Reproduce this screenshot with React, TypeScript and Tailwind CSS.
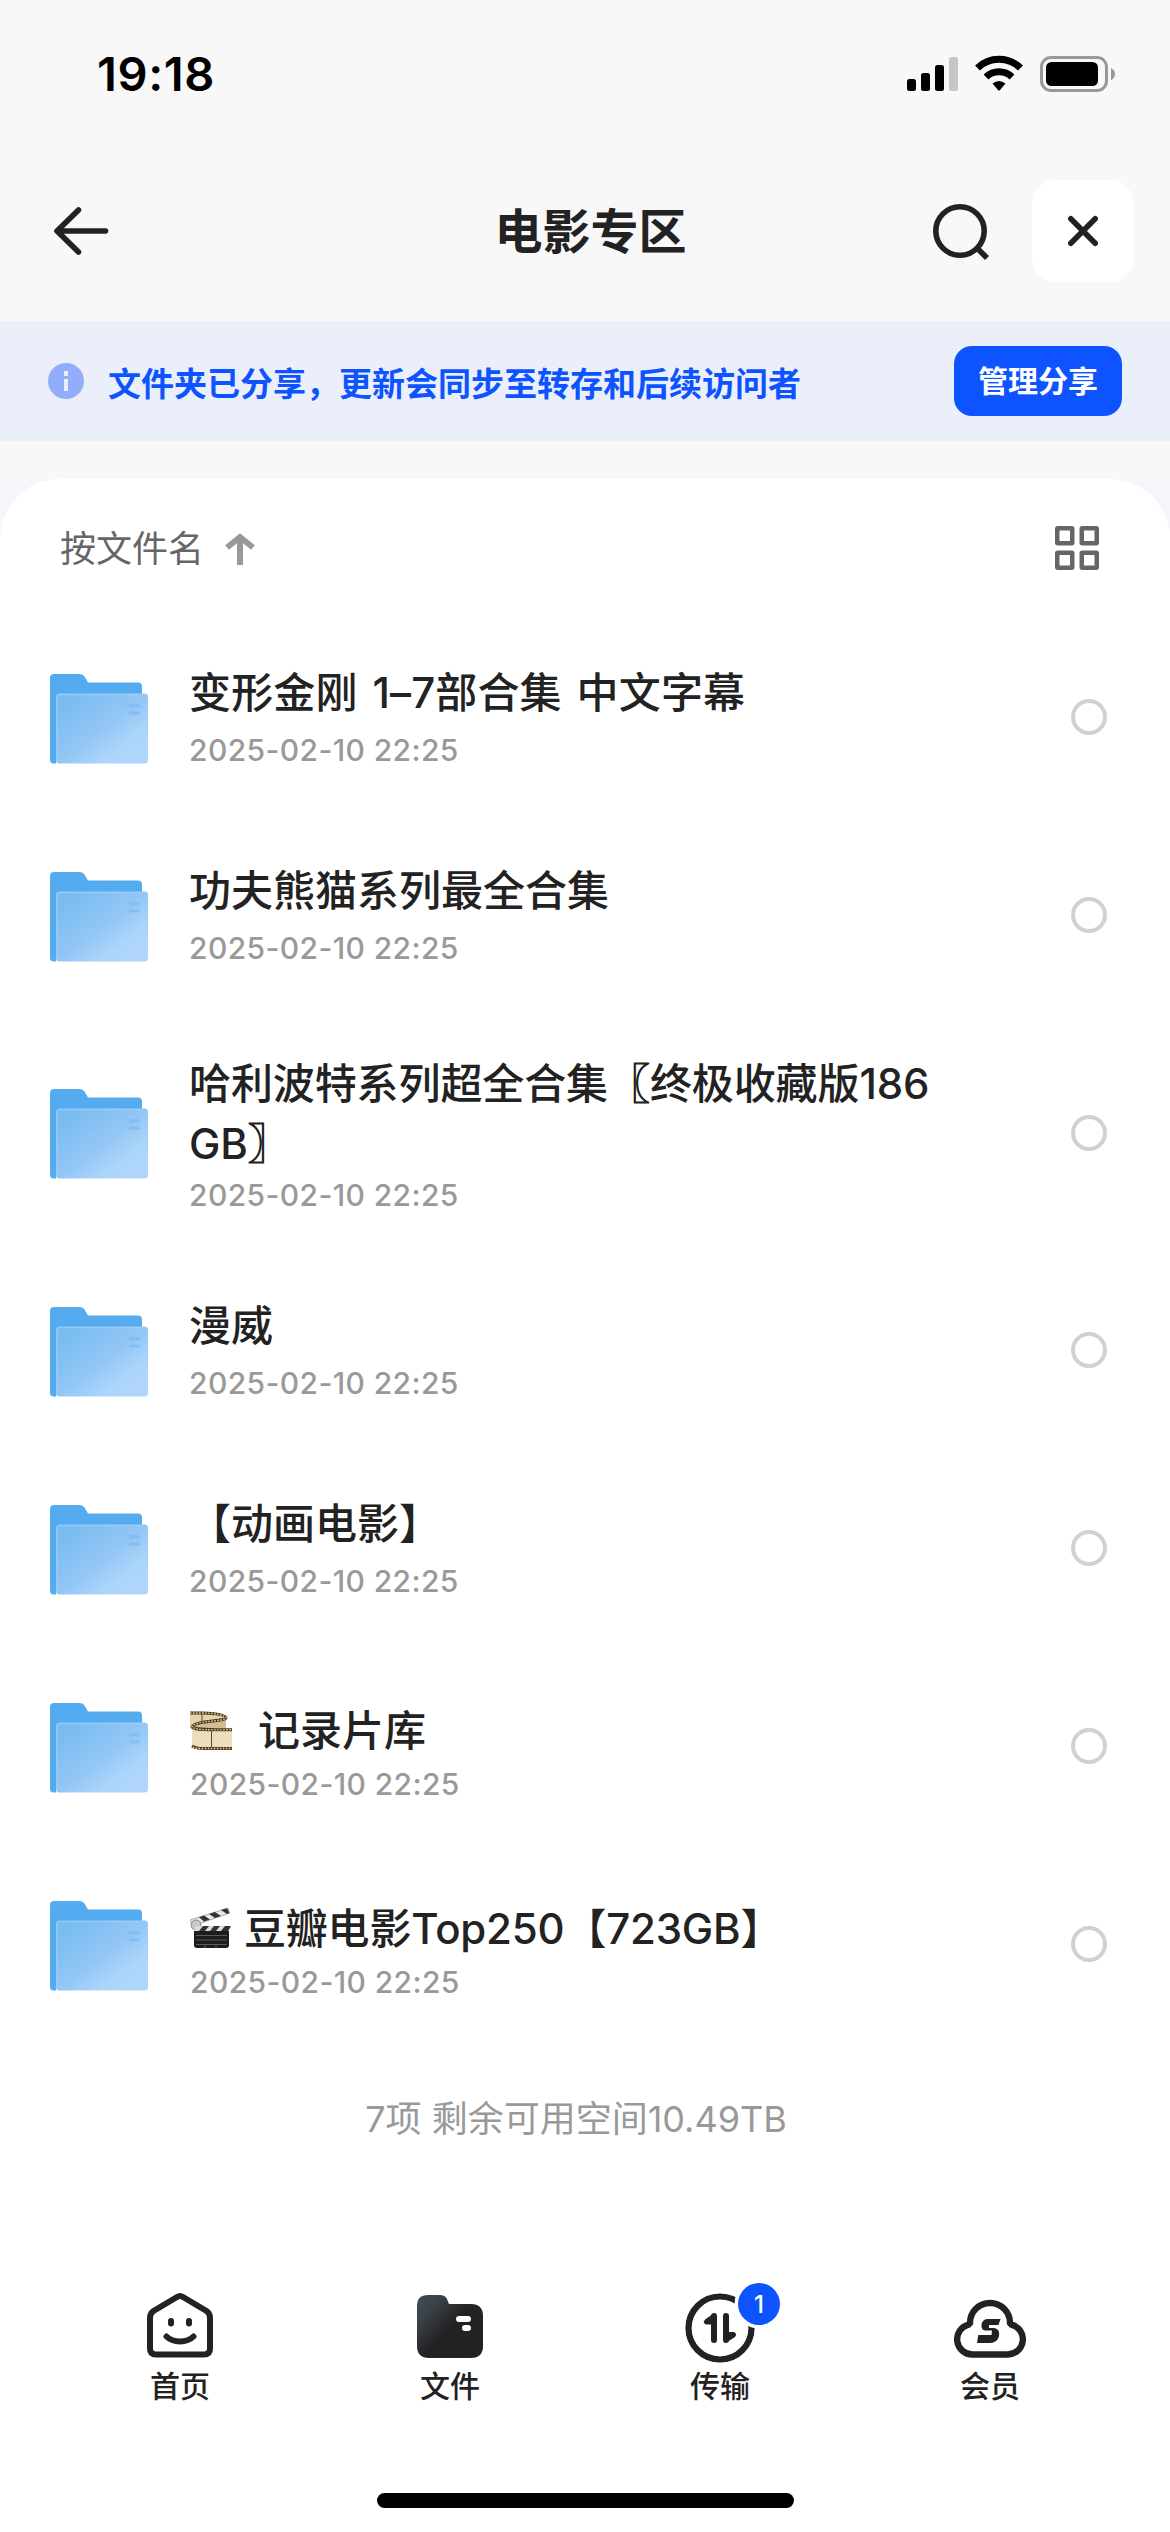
import React from "react";

const inter = "font-['Inter','Noto_Sans_CJK_SC',sans-serif]";

function StatusBar() {
  return (
    <div className="flex h-[144px] items-start justify-between pl-[97px] pr-[54px]">
      <div className="mt-[46px] text-[47px] leading-[56px] font-semibold tracking-[0.6px] text-black">19:18</div>
      <svg className="mt-[50px]" width="210" height="48" viewBox="906 50 210 48">
        <rect x="907" y="79" width="9" height="12" rx="2.5" />
        <rect x="921" y="73" width="9" height="18" rx="2.5" />
        <rect x="935" y="65" width="9" height="26" rx="2.5" />
        <rect x="949" y="57" width="9" height="34" rx="2.5" fill="#c6c6c6" />
        <path d="M977.5 68 A31 31 0 0 1 1020.500 68" fill="none" stroke="#000" strokeWidth="7" />
        <path d="M986 77 A19 19 0 0 1 1012 77" fill="none" stroke="#000" strokeWidth="7" />
        <path d="M992.500 83.500 Q999 78.500 1005.500 83.500 L999.800 90.200 Q999 91 998.200 90.200 Z" />
        <rect x="1041.500" y="57.500" width="65" height="33" rx="9.500" fill="none" stroke="#999" strokeWidth="3" />
        <rect x="1046" y="62" width="52" height="24" rx="5.500" />
        <path d="M1111 68 Q1115 70 1115 74 Q1115 78 1111 80 Z" fill="#999" />
      </svg>
    </div>
  );
}

function Header() {
  return (
    <header className="grid h-[177px] grid-cols-3 pt-9">
      <div className="flex h-[102px] items-center pl-[51px]">
        <svg width="60" height="60" viewBox="0 0 60 60" fill="none" stroke="#222" strokeWidth="5.600" strokeLinecap="round" strokeLinejoin="round">
          <path d="M27.500 9 L6 30 L27.500 51 M7 30 H54.500" />
        </svg>
      </div>
      <h1 className="pl-[11px] text-center text-[48px] leading-[104px] font-bold text-[#222]">电影专区</h1>
      <div className="flex justify-end gap-[40px] pr-9">
        <svg className="mt-[20px]" width="62" height="62" viewBox="0 0 62 62" fill="none" stroke="#222" strokeWidth="5.600">
          <circle cx="30" cy="31" r="24.200" />
          <path d="M47 48 L57 58" />
        </svg>
        <div className="flex size-[102px] items-center justify-center rounded-[24px] bg-white">
          <svg width="36" height="36" viewBox="0 0 36 36" stroke="#222" strokeWidth="5.600" strokeLinecap="round">
            <path d="M5.800 5.800 L30.200 30.200 M30.200 5.800 L5.800 30.200" />
          </svg>
        </div>
      </div>
    </header>
  );
}

function Banner() {
  return (
    <div className="flex h-[120px] items-center bg-[#ebeff9] pl-12 pr-12 font-bold">
      <svg width="36" height="36" viewBox="0 0 36 36">
        <circle cx="18" cy="18" r="18" fill="#92aefb" />
        <rect x="16" y="8" width="4" height="5" fill="#ebeff9" />
        <rect x="16" y="16" width="4" height="12" fill="#ebeff9" />
      </svg>
      <span className="ml-6 flex-1 pt-[5px] text-[33px] leading-[48px] whitespace-nowrap text-[#0d53ff]">
        文件夹已分享，更新会同步至转存和后续访问者
      </span>
      <span className="h-[70px] w-[168px] rounded-[18px] bg-[#0d53ff] text-center text-[30px] leading-[70px] text-white">
        管理分享
      </span>
    </div>
  );
}

function FolderIcon() {
  return (
    <svg className="mt-[3px] block" width="98" height="90" viewBox="0 0 98 90">
      <defs>
        <linearGradient id="folderFront" x1="0.1" y1="0.1" x2="0.9" y2="0.9">
          <stop offset="0" stopColor="#78bcf0" />
          <stop offset="0.5" stopColor="#92c6f6" />
          <stop offset="0.8" stopColor="#acd5fa" />
          <stop offset="1" stopColor="#b0d5fb" />
        </linearGradient>
      </defs>
      <path d="M0 4 Q0 0 4 0 H30 Q33 0 34.500 2.500 L38 8.500 H88 Q92 8.500 92 12.500 V80 H6 V89.500 H4 Q0 89.500 0 86 Z" fill="#55abef" />
      <rect x="6" y="19.500" width="92" height="70" rx="3.500" fill="url(#folderFront)" />
      <path d="M7 88 V23 Q7 20.500 10 20.500 H96" fill="none" stroke="#a0d0f8" strokeWidth="1.500" opacity="0.7" />
      <rect x="79" y="30" width="10.500" height="3.500" fill="#83bdf3" />
      <rect x="79" y="37.500" width="10.500" height="3" fill="#83bdf3" />
    </svg>
  );
}

function FilmIcon() {
  return (
    <svg width="42" height="40" viewBox="0 0 42 40">
      <path d="M0 2 C14 1 35 2 36 6 V29 C30 31 12 30 3 34 V14 C4 11 18 10 30 9 C18 9 8 14 0 13 Z" fill="#d3bd90" />
      <path d="M0 3 H12 C24 3 33 5 34 7 C30 10 8 10 3 15 L0 15 Z" fill="#e6d4a8" />
      <path d="M2 17 C6 19 20 18.500 42 18.500 V38 H12 Q3 38 2 34 Z" fill="#ecdfbb" />
      <path d="M0 2 H12 C26 2.500 36 4 36 7 C34 11 5 9 2 16 C6 19.500 22 18.800 42 18.800" fill="none" stroke="#4c381d" strokeWidth="3" />
      <path d="M0 2 H12 C26 2.500 36 4 36 7 C34 11 5 9 2 16 C6 19.500 22 18.800 42 18.800" fill="none" stroke="#e8d9b2" strokeWidth="1.400" strokeDasharray="1.500 1.500" />
      <path d="M2 35 Q6 37.500 14 37.500 H42" fill="none" stroke="#4c381d" strokeWidth="3" />
      <path d="M3 36 Q6 37.500 14 37.500 H42" fill="none" stroke="#e8d9b2" strokeWidth="1.400" strokeDasharray="1.500 1.500" />
      <path d="M21.500 20 V36 M12 3 V10" stroke="#5e482a" />
    </svg>
  );
}

function ClapperIcon() {
  return (
    <svg width="42" height="42" viewBox="0 0 42 42">
      <path d="M0 12 L38 0 L39.500 5 L3 18 Z" fill="#e8e8e8" stroke="#777" strokeWidth="0.6" />
      <path d="M9 9.200 L14 7.600 L20 11.500 L14 13.500 Z M19 6 L25 4 L31 8 L25 10 Z M31 2 L37 0.300 L39.500 5 L37 6 Z" fill="#333" />
      <circle cx="6" cy="17" r="5" fill="#c3cbd0" stroke="#777" strokeWidth="0.8" />
      <path d="M6 18 H41 L39 23 H4 Z" fill="#ddd" />
      <path d="M13 18 H19 L15 23 H9 Z M24 18 H30 L26 23 H20 Z M35 18 H41 L38 23 H31 Z" fill="#333" />
      <path d="M4 23 H39 V37 Q39 40 36 40 H7 Q4 40 4 37 Z" fill="#1c1c1c" />
      <path d="M6 27.500 H37 M6 32 H37 M6 36.500 H37 M15 37 V40 M26 37 V40" stroke="#6b6b6b" strokeWidth="0.800" />
    </svg>
  );
}

interface Item {
  lines: React.ReactNode[];
  icon?: "film" | "clapper";
  row: string;
  body: string;
  text: string;
  gap: string;
}

const plain = {
  row: "h-[198px]",
  body: "ml-[41px] pt-[2px]",
  text: "leading-[60px]",
  gap: "mt-[4px]",
};

const withIcon = {
  row: "h-[198px]",
  body: "ml-[42px] pt-[18px]",
  text: "leading-[54px]",
  gap: "mt-[3px]",
};

function Bracket({ children }: { children: string }) {
  return <span className="[-webkit-text-stroke:1px_#222]">{children}</span>;
}

const items: Item[] = [
  { ...plain, text: "leading-[60px] tracking-[0.15px] [word-spacing:3.5px]", lines: ["变形金刚 1–7部合集 中文字幕"] },
  { ...plain, lines: ["功夫熊猫系列最全合集"] },
  {
    row: "h-[237px]",
    body: "ml-[41px] pt-[6px]",
    text: "leading-[60px] tracking-[-0.1px]",
    gap: "-mt-[2px]",
    lines: [
      <>哈利波特系列超全合集<Bracket>〖</Bracket>终极收藏版186</>,
      <>GB<Bracket>〗</Bracket></>,
    ],
  },
  { ...plain, lines: ["漫威"] },
  { ...plain, lines: ["【动画电影】"] },
  { ...withIcon, lines: ["记录片库"], icon: "film" },
  { ...withIcon, text: "leading-[54px] tracking-[-0.2px]", lines: ["豆瓣电影Top250【723GB】"], icon: "clapper" },
];

function Row({ item }: { item: Item }) {
  return (
    <li className={`flex items-center pl-[50px] pr-[63px] ${item.row}`}>
      <FolderIcon />
      <div className={`flex-1 ${item.body}`}>
        <div className={`flex items-center text-[42px] font-[450] whitespace-nowrap text-[#222] ${item.text}`}>
          {item.icon === "film" && <span className="mr-[26px]"><FilmIcon /></span>}
          {item.icon === "clapper" && <span className="mr-[12px]"><ClapperIcon /></span>}
          <div>
            {item.lines.map((line, i) => (
              <div key={i}>{line}</div>
            ))}
          </div>
        </div>
        <div className={`text-[30px] leading-[46px] font-[450] tracking-[0.4px] text-[#999] ${item.gap}`}>2025-02-10 22:25</div>
      </div>
      <span className="size-9 rounded-full border-4 border-[#d0d0d6]" />
    </li>
  );
}

function HomeIcon() {
  return (
    <svg width="72" height="72" viewBox="0 0 72 72" fill="none" stroke="#222" strokeWidth="6" strokeLinecap="round" strokeLinejoin="round">
      <path d="M33 5 Q36 3 39 5 L62.500 19 Q66 21.300 66 26 V56.500 Q66 62.500 60 62.500 H12 Q6 62.500 6 56.500 V26 Q6 21.300 9.500 19 Z" />
      <path d="M27 29 V31.500 M45 29 V31.500" />
      <path d="M22.500 44.500 C29 51 43 51 49.500 44.500" />
    </svg>
  );
}

function FilesIcon() {
  return (
    <svg width="72" height="72" viewBox="0 0 72 72">
      <defs>
        <linearGradient id="filesDark" x1="0.05" y1="0.1" x2="0.5" y2="0.5">
          <stop offset="0" stopColor="#404750" />
          <stop offset="0.35" stopColor="#3b4149" />
          <stop offset="1" stopColor="#222" />
        </linearGradient>
      </defs>
      <path d="M3 14 Q3 3 14 3 H26 Q31 3 33 7 L35 12 H57 Q69 12 69 24 V54 Q69 66 57 66 H15 Q3 66 3 54 Z" fill="url(#filesDark)" />
      <rect x="42" y="24" width="15" height="6" rx="3" fill="#fff" />
      <rect x="48" y="33" width="9" height="6" rx="3" fill="#fff" />
    </svg>
  );
}

function TransferIcon() {
  return (
    <svg width="72" height="72" viewBox="0 0 72 72">
      <circle cx="36" cy="36" r="31.500" fill="none" stroke="#222" strokeWidth="6.200" />
      <path d="M30 24 V48 M42 24 V48" stroke="#222" strokeWidth="6" strokeLinecap="round" />
      <path d="M30 21.200 L21 27.500 Q19 29.500 20.500 31.500 Q21 32.500 23 32.500 H30 Z M42 50.800 L51 45 Q53 43 51.500 41 Q51 40 49 40 H42 Z" fill="#222" />
      <circle cx="75" cy="12" r="24.500" fill="#fff" />
    </svg>
  );
}

function CloudIcon() {
  return (
    <svg width="72" height="72" viewBox="0 0 72 72">
      <path d="M18.500 62.500 H53.500 A15.200 15.200 0 0 0 57.500 32.600 L56 31 A20 20 0 0 0 16 31 L14.500 32.600 A15.200 15.200 0 0 0 18.500 62.500 Z" fill="none" stroke="#222" strokeWidth="6.400" />
      <path d="M46.500 27 H34 Q28.500 27 27.500 32.500 Q26.800 38.500 32 38.500 H38 L37.500 43 H24.300 L23 51 H36 Q43.500 51 45 44 Q46 37 40.500 36 H34.800 L35.200 33 H44.500 Z" fill="#222" />
    </svg>
  );
}

const tabs = [
  { label: "首页", Icon: HomeIcon },
  { label: "文件", Icon: FilesIcon },
  { label: "传输", Icon: TransferIcon, badge: 1 },
  { label: "会员", Icon: CloudIcon },
];

export default function App() {
  return (
    <div className={`flex h-[2532px] w-[1170px] flex-col overflow-hidden bg-[#f8f8f8] ${inter}`}>
      <StatusBar />
      <Header />
      <Banner />
      <div className="h-[38px]" />
      <div className="flex flex-1 flex-col bg-[#f4f6f9]">
        <main className="flex flex-1 flex-col rounded-t-[60px] bg-white">
          <div className="flex h-[139px] items-center justify-between pl-[60px] pr-[71px]">
            <div className="flex items-center text-[36px] leading-[48px] text-[#666]">
              <span>按文件名</span>
              <svg className="ml-[21px]" width="30" height="32" viewBox="0 0 30 32" fill="none" stroke="#999" strokeWidth="6">
                <path d="M15 32 V4 M2 14.500 L15 4 L28 14.500" />
              </svg>
            </div>
            <svg className="mb-[2px]" width="44" height="44" viewBox="0 0 44 44" fill="none" stroke="#666" strokeWidth="4.500">
              <rect x="2.250" y="2.250" width="15" height="15" rx="0.500" />
              <rect x="26.750" y="2.250" width="15" height="15" rx="0.500" />
              <rect x="2.250" y="26.750" width="15" height="15" rx="0.500" />
              <rect x="26.750" y="26.750" width="15" height="15" rx="0.500" />
            </svg>
          </div>
          <ul>
            {items.map((item, i) => (
              <Row key={i} item={item} />
            ))}
          </ul>
          <p className="mt-[52px] pr-[18px] text-center text-[36px] leading-[48px] text-[#999]">7项 剩余可用空间10.49TB</p>
        </main>
      </div>
      <nav className="flex h-[240px] flex-col items-center justify-between bg-white pb-[24px]">
        <div className="grid w-full grid-cols-4 px-[45px]">
          {tabs.map(({ label, Icon, badge }) => (
            <div key={label} className="flex flex-col items-center text-[30px] leading-[42px] font-medium text-[#222]">
              <div className="relative">
                <Icon />
                {badge && (
                  <span className="absolute top-[-9px] left-[54px] size-[42px] rounded-full bg-[#0d53ff] text-center text-[24px] leading-[43px] text-white">
                    {badge}
                  </span>
                )}
              </div>
              <span className="mt-[1px]">{label}</span>
            </div>
          ))}
        </div>
        <div className="h-[15px] w-[417px] rounded-full bg-black" />
      </nav>
    </div>
  );
}
